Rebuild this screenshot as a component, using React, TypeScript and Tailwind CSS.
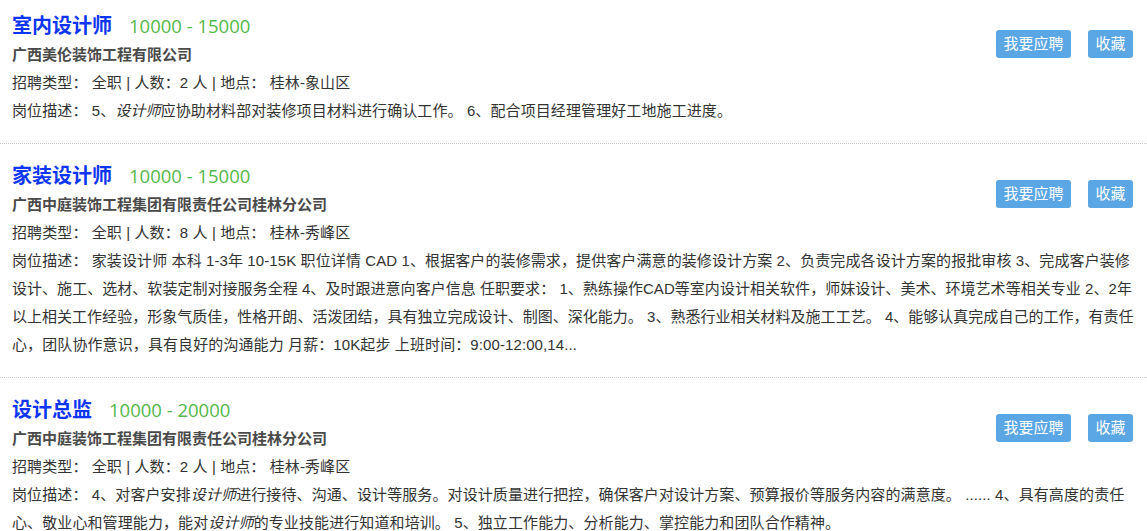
import React from "react";

type Line = { tc: string; content: React.ReactNode };

type Job = {
  title: string;
  salary: string;
  company: string;
  count: string;
  place: string;
  lines: Line[];
};

const jobs: Job[] = [
  {
    title: "室内设计师",
    salary: "10000 - 15000",
    company: "广西美伦装饰工程有限公司",
    count: "2",
    place: "桂林-象山区",
    lines: [
      {
        tc: "tracking-[0.1px]",
        content: (
          <>
            {"岗位描述： "}5、<i>设计师</i>应协助材料部对装修项目材料进行确认工作。 6、配合项目经理管理好工地施工进度。
          </>
        ),
      },
    ],
  },
  {
    title: "家装设计师",
    salary: "10000 - 15000",
    company: "广西中庭装饰工程集团有限责任公司桂林分公司",
    count: "8",
    place: "桂林-秀峰区",
    lines: [
      {
        tc: "tracking-[0.1px]",
        content:
          "岗位描述： 家装设计师 本科 1-3年 10-15K 职位详情 CAD 1、根据客户的装修需求，提供客户满意的装修设计方案 2、负责完成各设计方案的报批审核 3、完成客户装修",
      },
      {
        tc: "tracking-[0.04px]",
        content:
          "设计、施工、选材、软装定制对接服务全程 4、及时跟进意向客户信息 任职要求： 1、熟练操作CAD等室内设计相关软件，师妹设计、美术、环境艺术等相关专业 2、2年",
      },
      {
        tc: "tracking-[0.02px]",
        content:
          "以上相关工作经验，形象气质佳，性格开朗、活泼团结，具有独立完成设计、制图、深化能力。 3、熟悉行业相关材料及施工工艺。 4、能够认真完成自己的工作，有责任",
      },
      {
        tc: "tracking-[0.1px]",
        content: "心，团队协作意识，具有良好的沟通能力 月薪：10K起步 上班时间：9:00-12:00,14...",
      },
    ],
  },
  {
    title: "设计总监",
    salary: "10000 - 20000",
    company: "广西中庭装饰工程集团有限责任公司桂林分公司",
    count: "2",
    place: "桂林-秀峰区",
    lines: [
      {
        tc: "tracking-[0.1px]",
        content: (
          <>
            {"岗位描述： "}4、对客户安排<i>设计师</i>进行接待、沟通、设计等服务。对设计质量进行把控，确保客户对设计方案、预算报价等服务内容的满意度。 ...... 4、具有高度的责任
          </>
        ),
      },
      {
        tc: "tracking-[0.1px]",
        content: (
          <>
            心、敬业心和管理能力，能对<i>设计师</i>的专业技能进行知道和培训。 5、独立工作能力、分析能力、掌控能力和团队合作精神。
          </>
        ),
      },
    ],
  },
];

function JobCard({ job }: { job: Job }) {
  return (
    <div className="border-b border-dotted border-[#c8c8c8] pt-[17px] pb-[18px] pl-3 pr-[14px]">
      <div className="flex items-start justify-between">
        <div>
          <div className="flex items-center h-[30px]">
            <span className="text-[20px] font-bold text-[#0d35f2] leading-[30px]">{job.title}</span>
            <span className="ml-[17px] text-[18.5px] text-[#55b84a] leading-[30px] font-['Open_Sans','Noto_Sans_CJK_SC',sans-serif]">
              {job.salary}
            </span>
          </div>
          <div className="text-[15px] font-bold text-[#4a4a4a] leading-[28px]">{job.company}</div>
        </div>
        <div className="flex gap-[17px] mt-[19px]">
          <button className="w-[75px] h-[28px] rounded-[3px] bg-[#5ba6e4] text-white text-[15px] leading-[28px]">
            我要应聘
          </button>
          <button className="w-[45px] h-[28px] rounded-[3px] bg-[#5ba6e4] text-white text-[15px] leading-[28px]">
            收藏
          </button>
        </div>
      </div>
      <div className="text-[15px] text-[#333] leading-[28px] tracking-[0.1px]">
        {"招聘类型： 全职 | 人数：" + job.count + " 人 | 地点： " + job.place}
      </div>
      <div className="text-[15px] text-[#333] leading-[28px]">
        {job.lines.map((l, i) => (
          <div key={i} className={"whitespace-nowrap " + l.tc}>
            {l.content}
          </div>
        ))}
      </div>
    </div>
  );
}

export default function App() {
  return (
    <div className="w-[1147px] h-[531px] overflow-hidden bg-white font-['Liberation_Sans','Noto_Sans_CJK_SC',sans-serif]">
      <div className="-mt-[6px]">
        {jobs.map((j) => (
          <JobCard key={j.title} job={j} />
        ))}
      </div>
    </div>
  );
}
